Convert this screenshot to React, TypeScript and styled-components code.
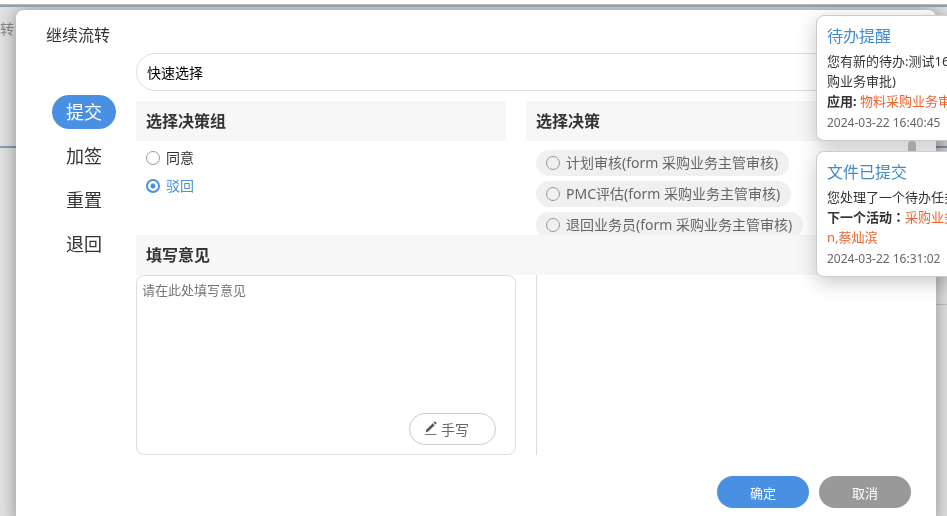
import React, { useState } from "react";
import styled, { createGlobalStyle } from "styled-components";

const fontStack = `"Noto Sans", "Noto Sans CJK SC", sans-serif`;

const Global = createGlobalStyle`
  * { box-sizing: border-box; }
  html, body { height: 100%; }
  body {
    margin: 0;
    overflow: hidden;
    background: #fff;
    color: #333;
    font-family: ${fontStack};
    font-size: 14px;
  }
  button, input, select, textarea { font-family: inherit; }
`;

const Page = styled.div`
  height: 100vh;
  padding-top: 4px;
  overflow: hidden;
`;

const Backdrop = styled.div`
  display: flex;
  flex-direction: column;
  height: 100%;
  background: #e4e4e4;
  border-top: 1px solid #b9b9b9;
`;

const BackHeader = styled.div`
  height: 143px;
  padding-top: 12px;
  border-top: 2px solid #86a0c0;
  border-bottom: 2px solid #86a0c0;
  color: #8a8a8a;
  line-height: 20px;
`;

const BackRow = styled.div`
  height: 157px;
  margin-left: 50%;
  border-bottom: 1px solid #c4c4c4;
`;

const Overlay = styled.div`
  position: fixed;
  inset: 7px 0 0;
  overflow: hidden;
`;

const Dialog = styled.section`
  display: flex;
  flex-direction: column;
  margin: 3px 11px 0 16px;
  padding-bottom: 20px;
  border-radius: 8px;
  background: #fff;
  box-shadow: 0 0 20px rgba(0, 0, 0, 0.4);
`;

const DialogTitle = styled.h1`
  margin: 0;
  padding: 13px 30px 6px;
  font-size: 16px;
  font-weight: 400;
  line-height: 24px;
`;

const DialogBody = styled.div`
  display: flex;
`;

const Nav = styled.nav`
  display: flex;
  flex: none;
  flex-direction: column;
  align-items: center;
  gap: 10px;
  width: 120px;
  padding: 42px 20px 0 36px;
`;

const NavButton = styled.button<{ $active: boolean }>`
  width: 64px;
  height: 34px;
  padding: 0;
  border: 0;
  border-radius: 17px;
  background: ${(p) => (p.$active ? "#4a90e2" : "transparent")};
  color: ${(p) => (p.$active ? "#fff" : "#333")};
  font-size: 18px;
  line-height: 34px;
`;

const Content = styled.div`
  flex: 1;
  min-width: 0;
  padding-right: 20px;
`;

const QuickSelect = styled.select`
  display: block;
  width: calc(100% - 20px);
  height: 38px;
  padding: 0 10px;
  appearance: none;
  border: 1px solid #ddd;
  border-radius: 19px;
  background: #fff;
  color: #000;
  font-size: 14px;
`;

const Scroller = styled.div`
  display: grid;
  grid-template-columns: minmax(0, 1fr) 8px;
  height: 134px;
  margin-top: 10px;
  overflow: hidden;
`;

const Groups = styled.div`
  display: grid;
  grid-template-columns: 1fr 1fr;
  gap: 20px;
  padding-right: 12px;
`;

const ScrollThumb = styled.div`
  height: 60px;
  margin-top: 40px;
  border-radius: 4px;
  background: #c1c1c1;
`;

const Group = styled.fieldset`
  display: flex;
  flex-direction: column;
  min-width: 0;
  margin: 0;
  padding: 0;
  border: 0;
`;

const SectionTitle = styled.h2`
  flex: none;
  margin: 0;
  padding: 0 10px;
  background: #f7f7f7;
  font-size: 16px;
  font-weight: 700;
  line-height: 40px;
`;

const RadioList = styled.div`
  display: flex;
  flex-direction: column;
  gap: 8px;
  padding: 7px 10px;
`;

const ChipList = styled.div`
  display: flex;
  flex-direction: column;
  align-items: flex-start;
  gap: 5px;
  padding: 9px 10px;
`;

const RadioLabel = styled.label<{ $checked: boolean }>`
  display: flex;
  align-items: center;
  gap: 6px;
  color: ${(p) => (p.$checked ? "#4a90e2" : "#333")};
  line-height: 20px;
`;

const ChipLabel = styled(RadioLabel)`
  padding: 0 11px 0 10px;
  border-radius: 13px;
  background: #f0f0f0;
  color: #666;
  line-height: 26px;
  white-space: nowrap;
`;

const Radio = styled.input`
  flex: none;
  width: 14px;
  height: 14px;
  margin: 0;
  appearance: none;
  border: 1px solid #999;
  border-radius: 50%;
  &:checked {
    border: 2px solid #4a90e2;
    background: radial-gradient(circle, #4a90e2 0 2px, transparent 3px);
  }
`;

const Comment = styled.div`
  display: grid;
  grid-template-columns: 1fr 1fr;
  gap: 20px;
`;

const CommentBox = styled.div`
  display: flex;
  flex-direction: column;
  height: 180px;
  border: 1px solid #ddd;
  border-radius: 8px;
`;

const CommentInput = styled.textarea`
  flex: 1;
  min-height: 0;
  padding: 4px 5px;
  border: 0;
  outline: 0;
  background: transparent;
  resize: none;
  font-size: 13px;
  line-height: 20px;
  &::placeholder { color: #757575; }
`;

const HandwriteButton = styled.button`
  display: flex;
  align-items: center;
  align-self: flex-end;
  gap: 4px;
  width: 87px;
  height: 32px;
  margin: 0 19px 9px 0;
  padding: 0 15px;
  border: 1px solid #ccc;
  border-radius: 16px;
  background: #fff;
  color: #666;
  font-size: 14px;
`;

const Aside = styled.div`
  border-left: 1px solid #ddd;
`;

const Footer = styled.footer`
  display: flex;
  justify-content: flex-end;
  gap: 10px;
  padding: 21px 25px 0;
`;

const ActionButton = styled.button<{ $primary?: boolean }>`
  width: 92px;
  height: 32px;
  border: 0;
  border-radius: 16px;
  background: ${(p) => (p.$primary ? "#4a90e2" : "#999")};
  color: #fff;
  font-size: 13px;
`;

const Toasts = styled.div`
  position: fixed;
  top: 15px;
  right: -9px;
  display: flex;
  flex-direction: column;
  gap: 10px;
  width: 140px;
`;

const Toast = styled.article`
  padding: 10px 10px 7px;
  border: 1px solid #ccc;
  border-radius: 8px;
  background: #fff;
  box-shadow: 0 5px 20px rgba(0, 0, 0, 0.22);
  font-size: 13px;
  line-height: 20px;
  white-space: nowrap;
`;

const ToastTitle = styled.h3`
  margin: 0 0 5px;
  color: #428bca;
  font-size: 16px;
  font-weight: 400;
  line-height: 20px;
`;

const ToastLine = styled.div`
  height: 20px;
`;

const Accent = styled.span`
  color: #f0622d;
`;

const Colon = styled.span`
  font-family: "Noto Sans CJK TC", sans-serif;
  line-height: 1;
`;

const ToastTime = styled.time`
  display: block;
  margin-top: 2px;
  color: #666;
  font-size: 12px;
`;

const PenIcon = () => (
  <svg width="12" height="16" viewBox="0 0 12 16" aria-hidden="true">
    <path d="M.7 11.200 1.300 8.700 7.800 2.300 9.700 4.200 3.200 10.600ZM8.500 1.600 9.300.8Q9.900.300 10.500.9L11.200 1.600Q11.700 2.200 11.200 2.700L10.400 3.500Z" fill="#555" />
    <path d="M0 13.500H11.500" stroke="#777" />
  </svg>
);

const actions = ["提交", "加签", "重置", "退回"];
const groups = ["同意", "驳回"];
const decisions = [
  "计划审核(form 采购业务主管审核)",
  "PMC评估(form 采购业务主管审核)",
  "退回业务员(form 采购业务主管审核)",
];

export default function App() {
  const [action, setAction] = useState("提交");
  const [group, setGroup] = useState("驳回");
  const [decision, setDecision] = useState("");

  return (
    <Page>
      <Global />
      <Backdrop>
        <BackHeader>转</BackHeader>
        <BackRow />
      </Backdrop>
      <Overlay>
        <Dialog role="dialog" aria-labelledby="dialog-title">
          <DialogTitle id="dialog-title">继续流转</DialogTitle>
          <DialogBody>
            <Nav>
              {actions.map((a) => (
                <NavButton key={a} type="button" $active={a === action} onClick={() => setAction(a)}>
                  {a}
                </NavButton>
              ))}
            </Nav>
            <Content>
              <QuickSelect aria-label="快速选择">
                <option>快速选择</option>
              </QuickSelect>
              <Scroller>
                <Groups>
                  <Group aria-labelledby="group-title">
                    <SectionTitle id="group-title">选择决策组</SectionTitle>
                    <RadioList>
                      {groups.map((g) => (
                        <RadioLabel key={g} $checked={g === group}>
                          <Radio type="radio" name="group" checked={g === group} onChange={() => setGroup(g)} />
                          {g}
                        </RadioLabel>
                      ))}
                    </RadioList>
                  </Group>
                  <Group aria-labelledby="decision-title">
                    <SectionTitle id="decision-title">选择决策</SectionTitle>
                    <ChipList>
                      {decisions.map((d) => (
                        <ChipLabel key={d} $checked={d === decision}>
                          <Radio type="radio" name="decision" checked={d === decision} onChange={() => setDecision(d)} />
                          {d}
                        </ChipLabel>
                      ))}
                    </ChipList>
                  </Group>
                </Groups>
                <ScrollThumb />
              </Scroller>
              <SectionTitle id="comment-title">填写意见</SectionTitle>
              <Comment>
                <CommentBox>
                  <CommentInput aria-labelledby="comment-title" placeholder="请在此处填写意见" />
                  <HandwriteButton type="button">
                    <PenIcon />
                    手写
                  </HandwriteButton>
                </CommentBox>
                <Aside />
              </Comment>
            </Content>
          </DialogBody>
          <Footer>
            <ActionButton type="button" $primary>确定</ActionButton>
            <ActionButton type="button">取消</ActionButton>
          </Footer>
        </Dialog>
      </Overlay>
      <Toasts>
        <Toast>
          <ToastTitle>待办提醒</ToastTitle>
          <ToastLine>您有新的待办:测试16</ToastLine>
          <ToastLine>购业务审批)</ToastLine>
          <ToastLine><b>应用:</b> <Accent>物料采购业务审</Accent></ToastLine>
          <ToastTime>2024-03-22 16:40:45</ToastTime>
        </Toast>
        <Toast>
          <ToastTitle>文件已提交</ToastTitle>
          <ToastLine>您处理了一个待办任务</ToastLine>
          <ToastLine><b>下一个活动<Colon>：</Colon></b><Accent>采购业务</Accent></ToastLine>
          <ToastLine><Accent>n,蔡灿滨</Accent></ToastLine>
          <ToastTime>2024-03-22 16:31:02</ToastTime>
        </Toast>
      </Toasts>
    </Page>
  );
}
